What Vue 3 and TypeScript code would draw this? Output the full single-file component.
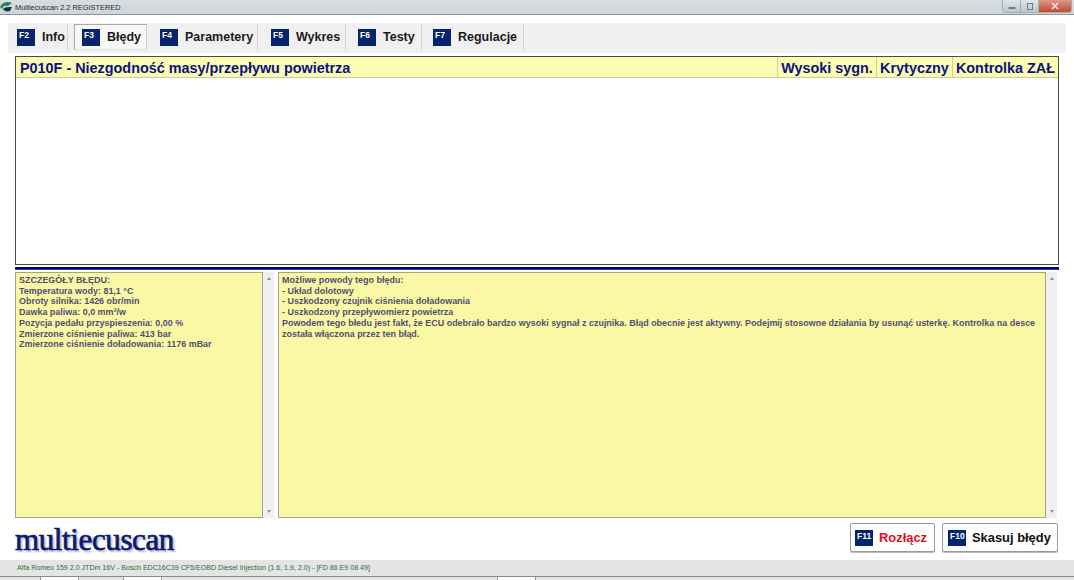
<script setup lang="ts">
const tabs = [
  { key: 'F2', label: 'Info', cls: 't1' },
  { key: 'F3', label: 'Błędy', cls: 't2 active' },
  { key: 'F4', label: 'Parametery', cls: 't3' },
  { key: 'F5', label: 'Wykres', cls: 't4' },
  { key: 'F6', label: 'Testy', cls: 't5' },
  { key: 'F7', label: 'Regulacje', cls: 't6' },
]
const details = [
  'SZCZEGÓŁY BŁĘDU:',
  'Temperatura wody: 81,1 °C',
  'Obroty silnika: 1426 obr/min',
  'Dawka paliwa: 0,0 mm³/w',
  'Pozycja pedału przyspieszenia: 0,00 %',
  'Zmierzone ciśnienie paliwa: 413 bar',
  'Zmierzone ciśnienie doładowania: 1176 mBar',
]
const causes = [
  'Możliwe powody tego błędu:',
  '- Układ dolotowy',
  '- Uszkodzony czujnik ciśnienia doładowania',
  '- Uszkodzony przepływomierz powietrza',
  'Powodem tego błedu jest fakt, że ECU odebrało bardzo wysoki sygnał z czujnika. Błąd obecnie jest aktywny. Podejmij stosowne działania by usunąć usterkę. Kontrolka na desce została włączona przez ten błąd.',
]
</script>

<template>
  <div class="window">
    <header class="titlebar">
      <svg class="appicon" width="13" height="12" viewBox="0 0 13 12">
        <path d="M0 6 C2 1 8 0 12 2 L8 5 C5 4 3 5 2 8 Z" fill="#2f7f55" />
        <path d="M3 8 C5 6 8 6 12 6 L10 10 C7 11 4 10 3 8 Z" fill="#16324f" />
      </svg>
      <span class="apptitle">Multiecuscan 2.2 REGISTERED</span>
      <div class="controls">
        <span class="ctl"><svg width="10" height="8" viewBox="0 0 10 8"><rect x="1.5" y="5" width="7" height="2" fill="#6d7b88" /></svg></span>
        <span class="ctl"><svg width="10" height="9" viewBox="0 0 10 9"><rect x="2.5" y="1.5" width="5" height="6" fill="none" stroke="#6d7b88" /></svg></span>
        <span class="ctl close"><svg width="10" height="8" viewBox="0 0 10 8"><path d="M2 1 L8 7 M8 1 L2 7" stroke="#f6e4e0" stroke-width="1.6" /></svg></span>
      </div>
    </header>

    <main class="client">
      <nav class="tabbar">
        <div v-for="t in tabs" :key="t.key" class="tab" :class="t.cls">
          <span class="fkey">{{ t.key }}</span>
          <span class="tablabel">{{ t.label }}</span>
        </div>
      </nav>

      <section class="panel">
        <div class="list">
          <div class="listhead">
            <div class="hcell hmain">P010F - Niezgodność masy/przepływu powietrza</div>
            <div class="hcell hc1">Wysoki sygn.</div>
            <div class="hcell hc2">Krytyczny</div>
            <div class="hcell hc3">Kontrolka ZAŁ</div>
          </div>
        </div>
        <div class="divider"></div>

        <div class="textrow">
          <div class="textwrap left">
            <div class="textbox">
              <div v-for="d in details" :key="d">{{ d }}</div>
            </div>
            <div class="scroll"><span class="up"></span><span class="down"></span></div>
          </div>
          <div class="textwrap right">
            <div class="textbox">
              <div v-for="c in causes" :key="c">{{ c }}</div>
            </div>
            <div class="scroll"><span class="up"></span><span class="down"></span></div>
          </div>
        </div>

        <footer class="actions">
          <div class="logo">multiecuscan</div>
          <button class="btn b1"><span class="fkey">F11</span><span class="danger">Rozłącz</span></button>
          <button class="btn b2"><span class="fkey">F10</span><span>Skasuj błędy</span></button>
        </footer>
      </section>
    </main>

    <div class="status">Alfa Romeo 159 2.0 JTDm 16V - Bosch EDC16C39 CF5/EOBD Diesel Injection (1.6, 1.9, 2.0) - [FD 86 E9 08 49]</div>
    <div class="taskbar">
      <span class="tb tb1"></span>
      <span class="tb tb2"></span>
      <span class="tb tb3"></span>
    </div>
  </div>
</template>

<style>
html, body { margin: 0; background: #fff; }
</style>

<style scoped>
.window {
  width: 1074px;
  height: 580px;
  overflow: hidden;
  display: flex;
  flex-direction: column;
  background: #fff;
  font-family: "Liberation Sans", Arial, sans-serif;
}
.titlebar {
  height: 14px;
  flex: none;
  display: flex;
  align-items: center;
  background: linear-gradient(#d6dde3, #cdd6dc);
  border-bottom: 1px solid #8e969c;
}
.appicon { margin: 0 2px 0 0; }
.apptitle { font-size: 7.4px; color: #2a2a2a; }
.controls {
  margin-left: auto;
  margin-right: 2px;
  align-self: flex-start;
  display: flex;
  height: 12px;
  border: 1px solid #a3adb5;
  border-top: 0;
  border-radius: 0 0 3px 3px;
  overflow: hidden;
}
.ctl {
  width: 18px;
  display: flex;
  align-items: center;
  justify-content: center;
  background: linear-gradient(#dfe5ea, #bcc6ce);
  border-right: 1px solid #a3adb5;
  box-sizing: border-box;
}
.close {
  width: 32px;
  border-right: 0;
  background: linear-gradient(#dd9a8d, #c2492f);
}
.client {
  flex: 1;
  min-height: 0;
  margin: 8px 8px 4px;
  display: flex;
  flex-direction: column;
}
.tabbar {
  height: 30px;
  flex: none;
  display: flex;
  align-items: stretch;
  background: #f0f0f0;
  padding-left: 9px;
}
.tab {
  display: flex;
  align-items: center;
  box-sizing: border-box;
  border-right: 1px solid #d4d4d4;
  margin-bottom: 3px;
  margin-top: 1px;
  font-size: 12.5px;
  font-weight: bold;
  color: #1a1a22;
}
.t1 { width: 51px; }
.t2.active {
  background: #f7f7f7;
  border: 1px solid #a9a9a9;
  border-bottom-color: #e4e4e4;
  border-right-color: #cfcfcf;
  width: 73px;
  margin-left: 6px;
  padding-left: 7px;
}
.t3 { width: 111px; padding-left: 13px; }
.t4 { width: 88px; padding-left: 13px; }
.t5 { width: 76px; padding-left: 12px; }
.t6 { width: 102px; padding-left: 11px; }
.fkey {
  width: 18px;
  height: 17px;
  flex: none;
  box-sizing: border-box;
  background: #04246e;
  color: #fff;
  font-family: "Liberation Sans", Arial, sans-serif;
  font-size: 8.5px;
  font-weight: bold;
  padding: 2px 0 0 2px;
  line-height: 9px;
  text-align: left;
}
.tablabel { margin-left: 7px; }
.panel {
  flex: 1;
  min-height: 0;
  background: #fff;
  padding: 3px 7px 0;
  display: flex;
  flex-direction: column;
}
.list {
  height: 209px;
  flex: none;
  box-sizing: border-box;
  border: 1px solid #4a4a4a;
  background: #fff;
}
.listhead {
  height: 20px;
  display: flex;
  background: #fbfbb2;
  border-bottom: 1px solid #c9c99a;
  font-size: 14.4px;
  font-weight: bold;
  color: #0b1280;
}
.hcell {
  display: flex;
  align-items: center;
  white-space: nowrap;
  box-sizing: border-box;
  border-left: 1px solid #cfcf9c;
  justify-content: center;
  padding-top: 1px;
}
.hmain { flex: 1; justify-content: flex-start; padding-left: 4px; border-left: 0; }
.hc1 { width: 99px; }
.hc2 { width: 76px; }
.hc3 { width: 106px; }
.divider {
  height: 3px;
  flex: none;
  margin-top: 2px;
  background: #04046e;
  box-shadow: inset 0 -1px 0 #2a3a9a;
}
.textrow {
  height: 246px;
  flex: none;
  margin-top: 2px;
  display: flex;
  gap: 4px;
}
.textwrap { display: flex; min-width: 0; }
.left { width: 259px; flex: none; }
.right { width: 779px; flex: none; }
.textbox {
  flex: 1;
  min-width: 0;
  box-sizing: border-box;
  background: #fbf8a5;
  border: 1px solid #a4a48a;
  padding: 2px 3px;
  font-size: 8.96px;
  line-height: 10.7px;
  font-weight: bold;
  color: #505070;
}
.scroll {
  width: 11px;
  flex: none;
  background: #f0f0f0;
  display: flex;
  flex-direction: column;
  justify-content: space-between;
  align-items: center;
  padding: 5px 0;
  box-sizing: border-box;
}
.up, .down {
  width: 0;
  height: 0;
  border-left: 2.5px solid transparent;
  border-right: 2.5px solid transparent;
}
.up { border-bottom: 3px solid #8a8f94; }
.down { border-top: 3px solid #8a8f94; }
.actions {
  flex: 1;
  min-height: 0;
  display: flex;
  align-items: flex-start;
  gap: 7px;
  padding-top: 5px;
}
.logo {
  margin-right: auto;
  font-family: "Liberation Serif", serif;
  font-size: 31px;
  font-weight: normal;
  line-height: 33px;
  letter-spacing: -0.38px;
  color: #0b1a6a;
  -webkit-text-stroke: 0.7px #0b1a6a;
  text-shadow: 2px 2px 2px #a9aec8;
}
.btn {
  height: 29px;
  box-sizing: border-box;
  display: flex;
  align-items: center;
  gap: 6px;
  padding: 0 0 0 4px;
  background: #fdfdfd;
  border: 1px solid #9a9a9a;
  border-radius: 2px;
  box-shadow: 0 1px 0 #bdbdbd;
  font-family: "Liberation Sans", Arial, sans-serif;
  font-size: 12.9px;
  font-weight: bold;
  color: #111;
}
.btn .fkey { height: 16px; }
.b1 { width: 85px; }
.b2 { width: 116px; margin-right: 1px; padding-left: 5px; }
.danger { color: #e00d24; }
.status {
  height: 16px;
  flex: none;
  background: #e4e4e4;
  font-size: 7.08px;
  line-height: 17px;
  padding-left: 17px;
  color: #2e6b3c;
}
.taskbar {
  height: 4px;
  flex: none;
  display: flex;
  background: #e6e6e6;
  border-top: 1px solid #8a8a8a;
  box-sizing: border-box;
}
.tb { height: 3px; width: 39px; background: #fff; border-left: 1px solid #999; border-right: 1px solid #999; box-sizing: border-box; }
.tb1 { margin-left: 40px; }
.tb2 { margin-left: 44px; }
.tb3 { margin-left: 335px; }
</style>
